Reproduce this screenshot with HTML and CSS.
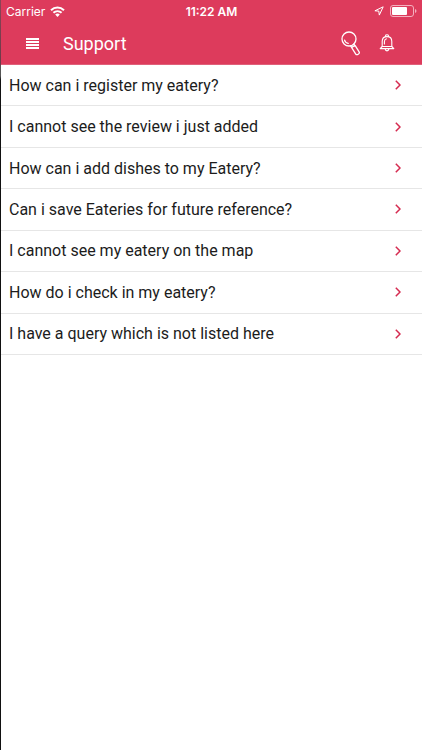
FILE: index.html
```html
<!DOCTYPE html>
<html lang="en">
<head>
    <meta charset="UTF-8">
    <meta name="viewport" content="width=device-width, initial-scale=1.0">
    <title>Support</title>
    <link rel="stylesheet" href="styles.css">
</head>
<body>
    <div class="screen">
        <header class="header">
            <div class="status-bar">
                <div class="carrier">
                    <span>Carrier</span>
                    <svg width="15" height="11" viewBox="0 0 15 11" fill="none" stroke="#fff" stroke-width="2">
                        <path d="M1 4.2C4.8 .6 10.2 .6 14 4.2"/>
                        <path d="M3.4 6.8C5.8 4.6 9.2 4.6 11.6 6.8"/>
                        <path d="M5.2 8.5C6.5 7.3 8.5 7.3 9.8 8.5L7.5 10.9Z" fill="#fff" stroke="none"/>
                    </svg>
                </div>
                <span class="time">11:22 AM</span>
                <div class="indicators">
                    <svg width="10" height="10" viewBox="0 0 10 10" fill="none" stroke="#fff" stroke-width="1" stroke-linejoin="round">
                        <path d="M9.2 .8L.9 4.8L4.8 5.1L5.3 9.1Z"/>
                    </svg>
                    <svg width="27" height="12" viewBox="0 0 27 12">
                        <rect x=".5" y=".5" width="23" height="11" rx="2.5" fill="none" stroke="#f4b0bf"/>
                        <rect x="2" y="2" width="15" height="8" rx="1" fill="#fff"/>
                        <path d="M25 4Q26.5 4.6 26.5 6Q26.5 7.4 25 8Z" fill="#f4b0bf"/>
                    </svg>
                </div>
            </div>
            <div class="nav-bar">
                <button type="button" class="icon-button" aria-label="Menu">
                    <svg width="13" height="11" viewBox="0 0 13 11" stroke="#fff" stroke-width="2">
                        <path d="M0 1H13M0 4H13M0 7H13M0 10H13"/>
                    </svg>
                </button>
                <h1 class="title">Support</h1>
                <button type="button" class="icon-button" aria-label="Search">
                    <svg width="20" height="25" viewBox="0 0 20 25" fill="none" stroke="#fff" stroke-width="1.3" stroke-linecap="round" stroke-linejoin="round">
                        <circle cx="8" cy="8" r="7"/>
                        <path d="M3.6 9.2C4.1 11 5.5 12.2 7.2 12.4"/>
                        <path d="M9.6 14.9L10.7 16.6L14.6 22.8C15.8 24.7 19.2 22.8 18.1 20.8L14.2 14.6L12.8 13.1M10.7 16.4L14 14.4"/>
                    </svg>
                </button>
                <button type="button" class="icon-button" aria-label="Notifications">
                    <svg width="16" height="18" viewBox="0 0 16 18" fill="none" stroke="#fff" stroke-width="1.1" stroke-linecap="round" stroke-linejoin="round">
                        <path d="M6.6 2.5V1.6C6.6 .4 9.4 .4 9.4 1.6V2.5"/>
                        <path d="M3.2 12.5V7.5C3.2 4.5 5.2 2.6 8 2.6S12.8 4.5 12.8 7.5V12.5L14.8 14.6H1.2L3.2 12.5Z"/>
                        <path d="M3.2 12.5H12.8M5.4 10V7.7C5.4 6.2 6.2 5.2 7.4 4.8M6.2 14.9C6.4 17.5 9.6 17.5 9.8 14.9"/>
                    </svg>
                </button>
            </div>
        </header>

        <main>
            <ul class="questions"></ul>
        </main>
    </div>

    <script>
        const questions = [
            'How can i register my eatery?',
            'I cannot see the review i just added',
            'How can i add dishes to my Eatery?',
            'Can i save Eateries for future reference?',
            'I cannot see my eatery on the map',
            'How do i check in my eatery?',
            'I have a query which is not listed here',
        ];

        const list = document.querySelector('.questions');
        questions.forEach(question => {
            const item = document.createElement('li');
            item.className = 'question';
            item.innerHTML = `
                <a class="question-link" href="#">
                    <span>${question}</span>
                    <svg width="6" height="10" viewBox="0 0 6 10" fill="none" stroke="#d52b50" stroke-width="1.5">
                        <path d="M.8 .7L5 5L.8 9.3"/>
                    </svg>
                </a>
            `;
            list.appendChild(item);
        });
    </script>
</body>
</html>
```

FILE: styles.css
```css
* {
    box-sizing: border-box;
}
body {
    margin: 0;
    background-color: #fff;
    font-family: Roboto, "Liberation Sans", sans-serif;
    color: #1c1c1c;
}
/* the edge of the page underneath shows on the left */
.screen {
    min-height: 100vh;
    padding-left: 1px;
    background: linear-gradient(#8c4456 0, #6b3a48 65px, #555 66px, #555 76px, #111 80px) left / 1px 100% no-repeat;
}
.header {
    background-color: #dd3b5c;
    color: #fff;
    border-bottom: 1px solid #e0607a;
}
.status-bar {
    display: grid;
    grid-template-columns: 1fr auto 1fr;
    align-items: center;
    height: 22px;
    padding: 0 5px;
    font-family: Inter, sans-serif;
    font-size: 12px;
}
.carrier {
    display: flex;
    align-items: center;
    gap: 5px;
}
.time {
    font-weight: 600;
}
.indicators {
    display: flex;
    align-items: center;
    justify-content: flex-end;
    gap: 6px;
}
.nav-bar {
    display: flex;
    align-items: center;
    gap: 18px;
    height: 42px;
    padding: 0 27px 0 25px;
}
.icon-button {
    display: flex;
    align-items: center;
    justify-content: center;
    padding: 0;
    border: none;
    background: none;
    cursor: pointer;
}
.title {
    flex: 1;
    margin: 0;
    padding-left: 6px;
    font-size: 18px;
    font-weight: 400;
}
.questions {
    display: grid;
    grid-auto-rows: 1fr;
    min-height: 290px;
    margin: 0;
    padding: 0;
    list-style: none;
}
.question {
    display: flex;
    border-bottom: 1px solid #e6e6e6;
}
.question-link {
    display: flex;
    flex: 1;
    align-items: center;
    justify-content: space-between;
    padding: 0 21px 0 8px;
    color: inherit;
    font-size: 16px;
    text-decoration: none;
}
```
